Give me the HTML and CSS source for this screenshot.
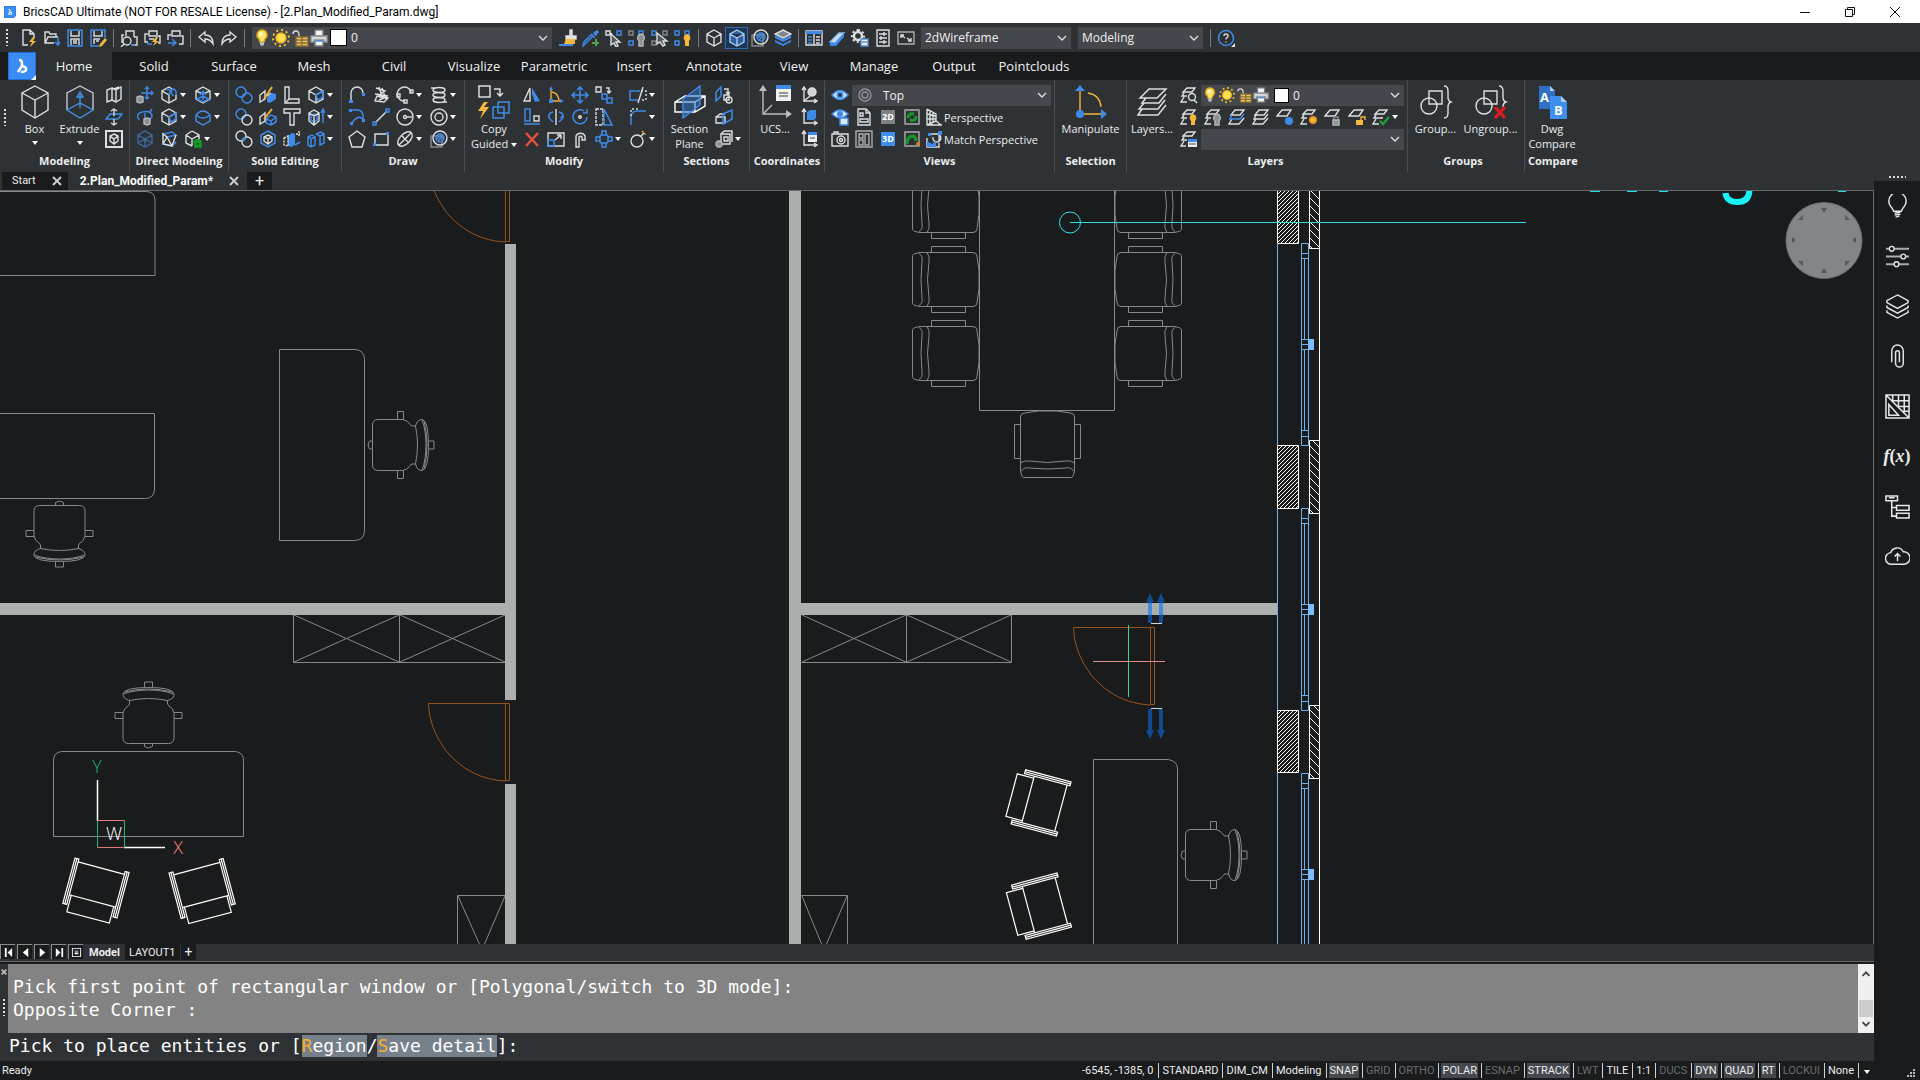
FILE: index.html
```html
<!DOCTYPE html>
<html lang="en">
<head>
  <meta charset="UTF-8">
  <meta name="viewport" content="width=device-width, initial-scale=1.0">
  <title>BricsCAD Ultimate</title>
  <link rel="stylesheet" href="styles.css">
</head>
<body>
  <!-- icon sprite -->
  <svg class="sprite" aria-hidden="true">
    <symbol id="i-new" viewBox="0 0 18 18"><path d="M8 16H3V1h7l4 4v4M10 1v4h4"/><path class="fy" d="M13 8l-4 5h3l-2 5 6-6h-3l2-4z"/></symbol>
    <symbol id="i-open" viewBox="0 0 18 18"><path d="M11 14H2V3h4l1 2h6v3M2 14l3-6h10"/><path class="b2" d="M15 8v8M12 13l3 3 2-3"/></symbol>
    <symbol id="i-save" viewBox="0 0 18 18"><path class="b2" d="M2 1h14v16H2z"/><path d="M5 2v5h8V2M5 16v-6h8v6M7 12h4M7 14h4"/></symbol>
    <symbol id="i-saveas" viewBox="0 0 18 18"><path class="b2" d="M10 17H2V1h14v8"/><path d="M5 2v5h8V2M5 15v-5h6M7 12h3"/><path class="fy" d="M16 9l2 2-5 6-3 1 1-3z"/></symbol>
    <symbol id="i-preview" viewBox="0 0 18 18"><path d="M6 7V2h8v6M4 6H2v8M14 8h3v8h-5"/><circle cx="7" cy="12" r="4"/><path d="M4 15l-3 3"/><path class="b2" d="M11 16h4"/></symbol>
    <symbol id="i-printflash" viewBox="0 0 18 18"><path d="M6 7V2h8v5zM5 5H2v8h3M15 7h2v7h-2M6 10h5"/><path class="fy" d="M13 8l-4 5h3l-2 4 6-5h-3l2-4z"/><path class="b2" d="M4 15h5"/></symbol>
    <symbol id="i-export" viewBox="0 0 18 18"><path d="M6 7V2h8v5zM5 6H2v5M15 7h2v8h-4"/><path class="b2" d="M2 14h7M6 10l4 4-4 3"/></symbol>
    <symbol id="i-undo" viewBox="0 0 18 18"><path d="M8 3L2 8l6 5v-3q5 0 8 5 0-9-8-9z"/></symbol>
    <symbol id="i-redo" viewBox="0 0 18 18"><path d="M10 3l6 5-6 5v-3q-5 0-8 5 0-9 8-9z"/></symbol>
    <symbol id="i-bulb" viewBox="0 0 18 18"><path fill="#ffe36a" stroke="#d9a520" d="M9 1a5 5 0 0 0-3 9l1 3h4l1-3a5 5 0 0 0-3-9z"/><path fill="#b9bcc0" stroke="none" d="M7 13h4v3l-2 1-2-1z"/><circle fill="#fff9c8" stroke="none" cx="8" cy="5" r="2"/></symbol>
    <symbol id="i-sun" viewBox="0 0 18 18"><circle cx="9" cy="9" r="5" fill="#ffe14d" stroke="#e8a92b"/><path stroke="#f2c230" stroke-width="2" stroke-dasharray="2 3" d="M9 1a8 8 0 1 1 0 16a8 8 0 1 1 0-16z"/></symbol>
    <symbol id="i-lock" viewBox="0 0 18 18"><path stroke="#d9dbdd" d="M2 5q0-3 3-3t3 4v3"/><path fill="#e8c878" stroke="#8a6d2b" d="M5 8h12v9H5z"/><path stroke="#8a6d2b" d="M5 11h12M5 14h12M11 8v9"/></symbol>
    <symbol id="i-printer" viewBox="0 0 18 18"><path fill="#f4f5f6" stroke="#777" d="M5 1h8v6H5zM5 11h8v6H5z"/><path fill="#d5d8db" stroke="#8f9296" d="M1 7h16v6h-3v-2H4v2H1z"/><path class="b2" d="M6 12h6"/></symbol>
    <symbol id="i-brush" viewBox="0 0 18 18"><path fill="#e6e7e8" d="M11 1h2v6h-2zM7 7h10v3H7z"/><path class="fy" d="M7 10h9v5H5z"/><path class="fb" d="M0 15h14v2H0z"/></symbol>
    <symbol id="i-dropper" viewBox="0 0 18 18"><path class="b2" d="M9 5l4 4M11 7L3 15l-2 2 1-4 7-7"/><path class="fb" d="M12 3l3-2 2 2-3 4-3-2z"/><path stroke="#4ea64c" stroke-width="2" d="M14 10v7M10 14h7"/></symbol>
    <symbol id="i-selcur" viewBox="0 0 18 18"><path d="M1 2h4v4H1z"/><path class="b2" d="M12 2h4v4h-4z"/><path d="M5 4l2 1"/><path fill="#55585c" d="M6 5v11l3-2 2 4 2-1-2-4h4z"/></symbol>
    <symbol id="i-selcur2" viewBox="0 0 18 18"><path class="b2" d="M1 2h4v4H1z"/><path d="M12 2h4v4h-4zM1 12h4v4H1z" stroke="#85888c"/><path fill="#55585c" d="M6 4v11l3-2 3 4 2-1-2-4h4z"/></symbol>
    <symbol id="i-isoff" viewBox="0 0 18 18"><path stroke="#85888c" d="M1 2h4v4H1z"/><path class="b2" d="M11 2h4v4h-4zM1 12h4v4H1z"/><path class="fg" d="M13 5a4 4 0 0 0-2 7v5h4v-5a4 4 0 0 0-2-7z"/></symbol>
    <symbol id="i-ison" viewBox="0 0 18 18"><path class="b2" d="M1 2h4v4H1zM11 2h4v4h-4zM1 12h4v4H1z"/><path class="fy" d="M13 5a4 4 0 0 0-2 7v5h4v-5a4 4 0 0 0-2-7z"/></symbol>
    <symbol id="i-cube" viewBox="0 0 18 18"><path d="M9 1l7 4v8l-7 4-7-4V5zM2 5l7 4 7-4M9 9v8"/></symbol>
    <symbol id="i-cubefull" viewBox="0 0 18 18"><path fill="#2c5f9e" stroke="#a9c9ef" d="M9 1l7 4v8l-7 4-7-4V5zM2 5l7 4 7-4M9 9v8"/></symbol>
    <symbol id="i-shade" viewBox="0 0 18 18"><path stroke="#85888c" d="M1 6h11v11H1z"/><circle cx="10" cy="8" r="7"/><circle cx="10" cy="8" r="4" class="b2"/><path class="b" d="M7 9l4-4M8 11l5-5"/></symbol>
    <symbol id="i-layercube" viewBox="0 0 18 18"><path fill="#7f858c" d="M9 1l8 4-8 4-8-4z"/><path class="fb" d="M1 6l8 4 8-4v3l-8 4-8-4zM1 11l8 4 8-4v2l-8 4-8-4z"/></symbol>
    <symbol id="i-table" viewBox="0 0 18 18"><path d="M1 2h16v14H1z"/><path class="fb" d="M1 2h16v3H1z"/><path class="b2" d="M3 8h4M3 11h4M3 14h4"/><path d="M9 5v11M11 8h4M11 11h4M11 14h4"/></symbol>
    <symbol id="i-eraser" viewBox="0 0 18 18"><path fill="#cfe0f5" stroke="#8fb7e8" d="M2 13l9-9h5l-9 10z"/><path class="fb" d="M7 14l9-10v4l-8 9H2v-4z"/></symbol>
    <symbol id="i-gear" viewBox="0 0 18 18"><circle cx="7" cy="7" r="4" stroke-width="2.4"/><path stroke-width="2" stroke-dasharray="2 2.4" d="M7 1a6 6 0 1 1 0 12a6 6 0 1 1 0-12z"/><path fill="#eceef0" stroke="#5a8fd0" d="M10 10h7v7h-7zM11 13h5"/></symbol>
    <symbol id="i-options" viewBox="0 0 18 18"><path d="M3 1h12v16H3zM5 5h8M5 9h8M5 13h8M10 3v4M7 7v4M10 11v4"/></symbol>
    <symbol id="i-full" viewBox="0 0 18 18"><path stroke="#a9acb0" d="M1 3h16v12H1z"/><path d="M4 6l4 3M4 9V6h3M14 12l-4-3M14 9v3h-3"/></symbol>
    <symbol id="i-help" viewBox="0 0 18 18"><circle cx="9" cy="9" r="7.5" class="b2"/><path d="M7 7q0-2 2-2t2 2q0 1-2 2.500v1M9 12.500v1"/><path fill="#ddd" stroke="none" d="M18 14v4h-4z"/></symbol>
    <symbol id="i-chev" viewBox="0 0 18 18"><path d="M5 7l4 4 4-4"/></symbol>
    <symbol id="i-arrow" viewBox="0 0 6 4"><path fill="#fff" stroke="none" d="M0 0h6L3 4z"/></symbol>

    <symbol id="i-box" viewBox="0 0 32 34"><path d="M16 1l13 7v17l-13 8-13-8V8zM3 8l13 7 13-7M16 15v18"/></symbol>
    <symbol id="i-extrude" viewBox="0 0 32 34"><path d="M3 25V8l13-7 13 7v17" stroke="#c4c7ca"/><path class="b" d="M3 25l13-7 13 7-13 8zM16 23V9M13 12l3-5 3 5z"/></symbol>
    <symbol id="i-poly" viewBox="0 0 18 18"><path d="M2 4l5-2v12l-5 2zM7 2l4 2v12l-4-2M11 4l5-3v12l-5 3M9 3l5-2"/></symbol>
    <symbol id="i-pushpull" viewBox="0 0 18 18"><path class="b2" d="M1 11l4-5h12l-4 5z"/><path d="M9 8V1M6 3l3-2 3 2M9 11v6M6 15l3 2 3-2"/></symbol>
    <symbol id="i-boxed" viewBox="0 0 18 18"><path stroke-width="2" d="M1 1h16v16H1z"/><path d="M9 4l4 2v5l-4 3-4-3V6zM5 6l4 3 4-3M9 9v5"/></symbol>
    <symbol id="i-dmove" viewBox="0 0 18 18"><path class="b2" d="M11 1v12M5 7h12M9 3l2-2 2 2M9 11l2 2 2-2M15 5l2 2-2 2"/><path class="fg" d="M1 11l3-1 3 1v5l-3 1-3-1z"/></symbol>
    <symbol id="i-drot" viewBox="0 0 18 18"><path class="b2" d="M3 12Q-1 6 6 4q8-2 10 3 0 4-4 4M14 4l2-3M9 5v5"/><path class="fg" d="M8 11l3-1 3 1v5l-3 1-3-1z"/></symbol>
    <symbol id="i-cubeb" viewBox="0 0 18 18"><path class="b" opacity=".6" d="M9 1l7 4v8l-7 4-7-4V5zM2 5l7 4 7-4M9 9v8M2 13l7-4 7 4"/></symbol>
    <symbol id="i-fillet" viewBox="0 0 18 18"><path d="M16 9v4l-7 4-7-4V5l7-4 3 2M2 5l7 4v8"/><path class="b2" d="M9 9q1-5 5-6 3 2 2 6M6 3q5 0 7 7"/></symbol>
    <symbol id="i-cubeface" viewBox="0 0 18 18"><path d="M9 1l7 4v8l-7 4-7-4V5zM2 5l7 4 7-4M9 9v8"/><path class="b2" d="M9 9l7-4v6l-5 3z"/></symbol>
    <symbol id="i-cubeup" viewBox="0 0 18 18"><path d="M9 1l7 4v8l-7 4-7-4V5zM2 5l7 3 7-3"/><path class="b2" d="M9 14V6M6 9l3-4 3 4M3 13l6-3 6 3-6 3z"/></symbol>
    <symbol id="i-loop" viewBox="0 0 18 18"><path class="b" d="M2 7q7-8 14 0v6l-7 4-7-4z"/><path d="M2 7q7 6 14 0" class="b2"/></symbol>
    <symbol id="i-twist" viewBox="0 0 18 18"><path class="b2" d="M3 4l9-2 4 3-9 2zM3 14l9 2 4-4"/><path d="M3 4l4 3 5 9-9-2zM16 5l-4 11M7 7L3 14"/></symbol>
    <symbol id="i-cubegreen" viewBox="0 0 18 18"><path d="M8 1l7 4v6M8 16l-6-3V5l6-4M2 5l6 4 7-4M8 9v7"/><path fill="#149a28" stroke="#149a28" d="M10 11q4-3 7 0v6h-6z"/><path stroke="#0b5615" d="M12 14h3"/></symbol>
    <symbol id="i-union" viewBox="0 0 18 18"><circle class="b2" cx="6" cy="6" r="5"/><circle class="b2" cx="12" cy="12" r="5"/></symbol>
    <symbol id="i-subtract" viewBox="0 0 18 18"><circle class="b2" cx="6" cy="6" r="5"/><circle cx="12" cy="12" r="5"/></symbol>
    <symbol id="i-intersect" viewBox="0 0 18 18"><circle cx="6" cy="6" r="5"/><circle cx="12" cy="12" r="5"/><path class="fb" d="M7 11q0-4 4-4 0 4-4 4z"/></symbol>
    <symbol id="i-slice" viewBox="0 0 18 18"><path class="fb" d="M8 11l5-4 4 1v5l-6 4-3-1z"/><path d="M1 16V9l5-4v8zM8 10l4-3"/><path class="y" stroke-width="2" d="M13 1L5 13"/></symbol>
    <symbol id="i-slice2" viewBox="0 0 18 18"><path class="b2" d="M7 11l5-4 5 2v5l-5 3-5-2zM7 11l5 2 5-4M12 13v4"/><path d="M1 16V9l5-4v8z"/><path class="y" stroke-width="2" d="M13 1L5 11"/></symbol>
    <symbol id="i-lshape" viewBox="0 0 18 18"><path d="M2 1h4v12h10v4H2z"/><path d="M6 13l-4 4"/></symbol>
    <symbol id="i-tshape" viewBox="0 0 18 18"><path d="M1 1h16v4h-6v12H7V5H1z"/></symbol>
    <symbol id="i-shell" viewBox="0 0 18 18"><path class="b2" d="M9 1l7 4v8l-7 4-7-4V5z"/><path d="M9 5l4 2v4l-4 3-4-3V7zM5 7l4 2 4-2M9 9v5"/></symbol>
    <symbol id="i-blocks" viewBox="0 0 18 18"><path class="fb" d="M5 6l4-3 3 1v11l-4 2-3-1z"/><path stroke-dasharray="2 1" d="M1 8l4-2v10l-4-1zM16 1v5M13 4h4"/><path class="b2" d="M12 15l5-3"/></symbol>
    <symbol id="i-blocks2" viewBox="0 0 18 18"><path class="b2" d="M1 7l4-2 3 2v8l-4 2-3-2zM1 7l3 2 4-2M4 9v8M9 4l5-2 3 2v9l-4 2V6M9 4l4 2 4-2"/></symbol>
    <symbol id="i-taper" viewBox="0 0 18 18"><path class="b2" d="M16 15V3M14 5l2-4 2 4M4 8l3-2 3 2v4l-3 2-3-2z"/><path d="M2 5l5-3 5 3v8l-5 4-5-4zM2 5l5 3 5-3M7 8v9"/></symbol>

    <symbol id="i-arcpt" viewBox="0 0 18 18"><path d="M3 14V7a6 6 0 0 1 12 0"/><path class="fb" d="M1 14h4v3H1zM14 7h3v3h-3z"/></symbol>
    <symbol id="i-arc2" viewBox="0 0 18 18"><path class="b2" d="M3 2h7q6 1 5 9-5-5-11 4"/><path class="fb" d="M1 1h3v3H1zM14 11h3v3h-3zM2 14h3v3H2z"/></symbol>
    <symbol id="i-pent" viewBox="0 0 18 18"><path d="M9 1l8 6-3 10H4L1 7z"/></symbol>
    <symbol id="i-scribble" viewBox="0 0 18 18"><path d="M4 2l9 3-6 4 9 3-4 4-9-1 2-5 7 2-5 2M7 1l4 12M3 8l13 2M10 2l4 11"/></symbol>
    <symbol id="i-line" viewBox="0 0 18 18"><path d="M3 15L15 3"/><path class="b2" d="M1 14h3v3H1zM14 1h3v3h-3z"/></symbol>
    <symbol id="i-rect" viewBox="0 0 18 18"><path d="M3 4h13v11H3z"/><path class="fb" d="M14 2h3v3h-3zM1 13h3v3H1z"/></symbol>
    <symbol id="i-arc" viewBox="0 0 18 18"><path d="M9 15A7 7 0 1 1 15 6"/><path d="M1 8h3v3H1zM8 14h3v3H8zM14 4h3v3h-3z"/></symbol>
    <symbol id="i-circle" viewBox="0 0 18 18"><circle cx="9" cy="9" r="8"/><circle cx="9" cy="9" r="1.500"/><path d="M10 9h6"/></symbol>
    <symbol id="i-ellipse" viewBox="0 0 18 18"><ellipse cx="9" cy="9" rx="9" ry="5" transform="rotate(-45 9 9)"/><path d="M3 15L15 3M6 6l6 6"/></symbol>
    <symbol id="i-helix" viewBox="0 0 18 18"><ellipse cx="9" cy="4" rx="6" ry="2.500"/><ellipse cx="9" cy="9" rx="6" ry="2.500"/><ellipse cx="9" cy="14" rx="6" ry="2.500"/><path d="M1 2h4M13 16h4"/></symbol>
    <symbol id="i-donut" viewBox="0 0 18 18"><circle cx="9" cy="9" r="8"/><circle cx="9" cy="9" r="4"/></symbol>

    <symbol id="i-copyg" viewBox="0 0 34 34"><path stroke-width="1.500" d="M2 1h11v11H2zM17 4h6v6M20 8l3 3 3-3"/><path class="b2" d="M21 17h11v11H21zM16 22h11v11H16z"/><path class="fy" d="M7 17L1 26h5l-3 8 9-12H7l4-5z"/></symbol>
    <symbol id="i-mirror" viewBox="0 0 18 18"><path d="M1 15L7 2v13z"/><path class="fb" d="M9 2l8 13-5 1-3-8z"/></symbol>
    <symbol id="i-align" viewBox="0 0 18 18"><path class="b2" d="M2 1h5v12H2zM1 16h16"/><path d="M11 8h5v5h-5z"/></symbol>
    <symbol id="i-del" viewBox="0 0 18 18"><path stroke="#e5533d" stroke-width="2.400" d="M3 3l12 13M15 3L3 16"/></symbol>
    <symbol id="i-manip" viewBox="0 0 18 18"><path class="y" d="M4 15V4M4 15h9M5 6q6 1 7 8"/><path class="fb" d="M2 4l2-4 2 4zM13 13l4 2-4 2zM2 13h4v4H2z"/></symbol>
    <symbol id="i-flip" viewBox="0 0 18 18"><path d="M9 1v16"/><path class="b2" d="M6 4Q1 5 2 10l4 4M12 4q5 1 4 6l-4 4M16 8l-3 2"/></symbol>
    <symbol id="i-scale" viewBox="0 0 18 18"><path d="M1 3h16v13H1zM8 10l6-5M10 5h4v4"/><path class="b2" d="M1 10h6v6H1z"/></symbol>
    <symbol id="i-move" viewBox="0 0 18 18"><path class="b2" d="M9 1v16M1 9h16M6 4l3-3 3 3M6 14l3 3 3-3M4 6L1 9l3 3M14 6l3 3-3 3"/></symbol>
    <symbol id="i-rotate" viewBox="0 0 18 18"><path class="b2" d="M13 3a7 7 0 1 0 3 6M12 5l4 0 0-4"/><circle cx="9" cy="9" r="1.300"/></symbol>
    <symbol id="i-offset" viewBox="0 0 18 18"><path d="M5 17V6a5 5 0 0 1 9 0v4h-3V7a2 2 0 0 0-3 0v10z"/></symbol>
    <symbol id="i-copy" viewBox="0 0 18 18"><path d="M1 1h5v5H1zM11 2h3v5M12 5l2 2 2-2"/><path class="b2" d="M7 8h5v5H7zM12 12h5v5h-5z"/></symbol>
    <symbol id="i-stretch" viewBox="0 0 18 18"><path d="M1 1h7v16H1z" stroke-dasharray="3 1"/><path class="b2" d="M9 1l8 16H9z"/></symbol>
    <symbol id="i-explode" viewBox="0 0 18 18"><circle class="b2" cx="9" cy="9" r="5"/><path class="b2" fill="#2e3235" d="M7 1h4v4H7zM7 13h4v4H7zM1 7h4v4H1zM13 7h4v4h-4z"/></symbol>
    <symbol id="i-trim" viewBox="0 0 18 18"><path d="M14 1L9 17"/><path class="b2" d="M11 5H1v9h8"/><path d="M12 5h5v9h-5" stroke-dasharray="2 2"/></symbol>
    <symbol id="i-corner" viewBox="0 0 18 18"><path class="b2" d="M2 17V9q0-6 7-6h8"/><path stroke-dasharray="2 2" d="M2 8V1h8"/></symbol>
    <symbol id="i-bomb" viewBox="0 0 18 18"><circle cx="8" cy="11" r="6"/><path d="M12 6l3-3"/><path class="y" stroke-dasharray="2 1" d="M13 1l4 4"/></symbol>

    <symbol id="i-section" viewBox="0 0 34 34"><path stroke="#fff" d="M2 17l10-6h20v10l-10 6H2zM2 17h20v10M22 17l10-6"/><path fill="#2d78cf" fill-opacity=".5" stroke="#3f8ae8" d="M10 14l17-13v19L10 33z"/></symbol>
    <symbol id="i-sec1" viewBox="0 0 18 18"><path class="b2" d="M1 6l5-5v9l-5 5z"/><path d="M9 3h4v5M11 6l2 2 2-2M9 9h5v5H9z"/><circle cx="14" cy="14" r="3"/></symbol>
    <symbol id="i-sec2" viewBox="0 0 18 18"><path d="M1 9l4-3h5M1 9v6h9V9z"/><path class="b2" d="M8 6l9-4v9l-9 5z"/></symbol>
    <symbol id="i-sec3" viewBox="0 0 18 18"><path d="M6 4h9v10H6zM9 1h8v11M6 4l3-3"/><path d="M9 7h4v4H9z"/><circle class="fg" cx="4" cy="14" r="3"/></symbol>
    <symbol id="i-ucs" viewBox="0 0 34 34"><path stroke="#b9bcc0" d="M5 4v25h24M6 28l8-8"/><path fill="#b9bcc0" stroke="none" d="M1 6l4-6 4 6zM28 25l6 4-6 4z"/><path fill="#eef0f2" stroke="none" d="M18 1h15v15H18z"/><path class="fb" d="M18 0h15v4H18z"/><path stroke="#777" d="M21 8h9M21 11h9"/></symbol>
    <symbol id="i-ucs1" viewBox="0 0 18 18"><path d="M4 16V2M2 4l2-3 2 3M4 15h12M14 13l3 2-3 2M4 15l6-5"/><circle fill="#cfd2d5" cx="12" cy="6" r="4"/></symbol>
    <symbol id="i-ucs2" viewBox="0 0 18 18"><path d="M4 16V2M2 4l2-3 2 3M4 15h12M14 13l3 2-3 2"/><path class="fb" d="M7 4l3-2h6v8l-2 2H7z"/></symbol>
    <symbol id="i-ucs3" viewBox="0 0 18 18"><path d="M4 16V2M2 4l2-3 2 3M4 15h12M14 13l3 2-3 2"/><path fill="#eceef0" stroke="none" d="M8 3h9v9H8z"/><path class="fb" d="M8 2h9v3H8z"/><path stroke="#777" d="M10 8h5"/></symbol>

    <symbol id="i-eye" viewBox="0 0 18 18"><path fill="#dfe7f2" stroke="#3f8ae8" stroke-width="1.600" d="M1 9q8-9 16 0-8 9-16 0z"/><circle class="fb" cx="9" cy="9" r="3.500"/><circle fill="#15202e" stroke="none" cx="9" cy="9" r="1.500"/></symbol>
    <symbol id="i-eyesave" viewBox="0 0 18 18"><path fill="#dfe7f2" stroke="#3f8ae8" stroke-width="1.600" d="M1 6q8-8 16 0-8 8-16 0z"/><circle class="fb" cx="9" cy="6" r="3"/><path fill="#dce9fa" stroke="#3f8ae8" d="M9 10h8v7H9z"/></symbol>
    <symbol id="i-camera" viewBox="0 0 18 18"><path d="M1 4h16v12H1zM3 4V2h4v2"/><circle cx="10" cy="10" r="4"/><circle cx="10" cy="10" r="1.500"/></symbol>
    <symbol id="i-page" viewBox="0 0 18 18"><path d="M3 1h8l4 4v12H3zM11 1v4h4M5 5h3v3H5zM5 11h8v3H5z"/></symbol>
    <symbol id="i-vports" viewBox="0 0 18 18"><path stroke="#a9acb0" d="M1 1h16v16H1zM4 4h4v4H4zM4 10h4v5H4zM10 4h4v11h-4z"/></symbol>
    <symbol id="i-regen" viewBox="0 0 18 18"><path stroke="#a9acb0" d="M2 2h14v14H2z"/><path stroke="#159a28" stroke-width="3" d="M5 10q0-5 6-4M13 8q0 6-6 4"/></symbol>
    <symbol id="i-regen2" viewBox="0 0 18 18"><path stroke="#a9acb0" d="M2 2h14v14H2z"/><path stroke="#159a28" stroke-width="3" d="M4 14q0-8 6-8 3 1 3 5"/><circle cx="15" cy="14" r="2" fill="#e07a2c" stroke="none"/></symbol>
    <symbol id="i-persp" viewBox="0 0 18 18"><path d="M2 1v16h15M2 1l9 5v7l-9 4M2 6l9 2M2 11h9M5 3v12M8 5v9M11 13l5 4M5 14l3 3"/></symbol>
    <symbol id="i-match" viewBox="0 0 18 18"><path d="M6 4h8v8M8 7a4 4 0 1 0 4-3M2 8v9h12v-4"/><path class="fb" d="M2 11l5 3 4-3v6H2zM13 1h4v4h-4zM3 3h3v3H3z"/></symbol>
    <symbol id="i-target" viewBox="0 0 18 18"><circle cx="9" cy="9" r="6" stroke="#8d9094"/><circle cx="9" cy="9" r="3" stroke="#8d9094"/></symbol>
    <symbol id="i-manipbig" viewBox="0 0 34 34"><path class="y" d="M6 28V6M6 29h24M14 8q12 2 13 14"/><path class="fb" d="M1 6l5-6 5 6zM27 24l6 5-6 5z"/><circle class="fb" cx="6" cy="29" r="4"/></symbol>
    <symbol id="i-layersbig" viewBox="0 0 34 34"><path stroke-width="1.500" d="M14 4h17l-9 9H5zM11 13l-4 5h17l7-9M9 18l-5 6h19l7-9M7 24l-4 6h20l8-10"/></symbol>
    <symbol id="i-lay" viewBox="0 0 18 18"><path d="M7 2h9l-4 5H3zM4 7l-2 4h10l4-5M4 11l-3 5h10l5-6"/></symbol>
    <symbol id="i-layb" viewBox="0 0 18 18"><path d="M7 2h9l-4 5H3zM4 11l-3 5h10l5-6"/><path class="b2" d="M4 7l-2 4h10l4-5"/></symbol>
    <symbol id="i-layfind" viewBox="0 0 18 18"><path d="M7 2h8l-3 4H3zM4 7l-2 3h5M4 11l-3 5h6"/><circle cx="12" cy="11" r="3.500"/><path d="M14 14l3 3"/></symbol>
    <symbol id="i-layon" viewBox="0 0 18 18"><path d="M7 2h8l-3 4H3zM4 7l-2 3h5M4 11l-3 5h6"/><path class="fy" d="M13 6a4 4 0 0 0-2 7v4h4v-4a4 4 0 0 0-2-7z"/></symbol>
    <symbol id="i-layoff" viewBox="0 0 18 18"><path d="M7 2h8l-3 4H3zM4 7l-2 3h5M4 11l-3 5h6"/><path class="fg" d="M13 6a4 4 0 0 0-2 7v4h4v-4a4 4 0 0 0-2-7z"/></symbol>
    <symbol id="i-layfrz" viewBox="0 0 18 18"><path d="M6 2h9l-4 6H1z"/><circle class="fb" cx="13" cy="13" r="4"/></symbol>
    <symbol id="i-laythaw" viewBox="0 0 18 18"><path d="M7 2h8l-3 4H3zM4 7l-2 3h5M4 11l-3 5h6"/><circle fill="#f5b32f" stroke="#d9822b" cx="13" cy="12" r="3.500"/></symbol>
    <symbol id="i-laylock" viewBox="0 0 18 18"><path d="M6 2h9l-4 6H1z"/><path d="M10 12V9h4v3" stroke="#85888c"/><path class="fg" d="M9 12h6v5H9z"/></symbol>
    <symbol id="i-layunl" viewBox="0 0 18 18"><path d="M6 2h9l-4 6H1z"/><path class="y" d="M13 12V9h4v3"/><path class="fy" d="M8 12h7v5H8z"/></symbol>
    <symbol id="i-layok" viewBox="0 0 18 18"><path d="M7 2h8l-3 4H3zM4 7l-2 3h9M4 11l-3 5h6"/><path stroke="#1fa035" stroke-width="2.400" d="M8 13l3 3 6-7"/></symbol>
    <symbol id="i-laytab" viewBox="0 0 18 18"><path d="M7 2h8l-3 4H3zM4 7l-2 3h5M4 11l-3 5h5"/><path fill="#eceef0" stroke="none" d="M8 9h9v8H8z"/><path class="fb" d="M8 9h9v3H8z"/><path stroke="#777" d="M9 14h7"/></symbol>
    <symbol id="i-group" viewBox="0 0 34 34"><circle cx="10" cy="21" r="8"/><path d="M10 6h13v13H10zM25 1q4 0 4 5v6q0 4 3 5-3 1-3 5v6q0 5-4 5"/></symbol>
    <symbol id="i-ungroup" viewBox="0 0 34 34"><circle cx="10" cy="21" r="8"/><path d="M10 6h13v13H10zM25 1q4 0 4 5v6q0 4 3 5-3 1-3 5"/><path stroke="#e01b1b" stroke-width="3" d="M21 22l10 11M31 22L21 33"/></symbol>
    <symbol id="i-logo" viewBox="0 0 28 28"><path fill="#3b8cf5" stroke="#1d63c4" d="M0 0h28v28H0z"/><path stroke="#fff" stroke-width="2.500" d="M11 8q3 0 3 3v3l-4 6M14 14q5 1 4 4-1 2-5 2"/><path fill="#eee" stroke="none" d="M28 23v5h-5z"/></symbol>

    <symbol id="i-tip" viewBox="0 0 26 26"><path stroke-width="1.500" d="M9 18q-1-3-3-5a9 9 0 1 1 14 0q-2 2-3 5zM10 20l6-1M10 22l6-1M11 24l4-1"/></symbol>
    <symbol id="i-props" viewBox="0 0 26 26"><path stroke="#a9acb0" stroke-width="2" d="M1 5h24M1 13h24M1 21h24"/><g fill="#191b1d"><circle cx="7" cy="5" r="2.500"/><circle cx="19" cy="13" r="2.500"/><circle cx="12" cy="21" r="2.500"/></g></symbol>
    <symbol id="i-stack" viewBox="0 0 26 26"><path stroke-width="1.500" d="M13 1l11 6v2l-11 6L2 9V7zM2 12v2l11 6 11-6v-2M2 17v2l11 6 11-6v-2"/></symbol>
    <symbol id="i-clip" viewBox="0 0 26 26"><path stroke-width="1.500" d="M7 19V7a5 5 0 0 1 12 0v13a4 4 0 0 1-8 0V9a2 2 0 0 1 4 0v10"/></symbol>
    <symbol id="i-hatch" viewBox="0 0 26 26"><path stroke-width="1.600" d="M1 1h24v24H1zM1 1l24 24M4 11l10 11H4zM8 1v7M14 1v12M20 1v18M8 7h17M14 13h11M19 18h6"/></symbol>
    <symbol id="i-tree" viewBox="0 0 26 26"><path stroke-width="1.600" d="M1 2h12v5H1zM12 12h13v5H12zM12 20h13v5H12zM7 7v16h5M7 14h5M4 4h6"/></symbol>
    <symbol id="i-cloud" viewBox="0 0 26 26"><path stroke-width="1.500" d="M7 21a6 6 0 0 1-1-12 7 7 0 0 1 13-1 6.500 6.500 0 0 1 1 13zM13 18v-7M10 13l3-3 3 3"/></symbol>
  </svg>

  <header class="titlebar">
    <svg class="app-icon"><use href="#i-logo"/></svg>
    <span class="app-title">BricsCAD Ultimate (NOT FOR RESALE License) - [2.Plan_Modified_Param.dwg]</span>
    <button class="win-btn" aria-label="Minimize"><svg viewBox="0 0 12 12"><path d="M1 6.500h10"/></svg></button>
    <button class="win-btn" aria-label="Restore"><svg viewBox="0 0 12 12"><path d="M1.500 3.500h7v7h-7zM3.500 3V1.500h7v7H9"/></svg></button>
    <button class="win-btn" aria-label="Close"><svg viewBox="0 0 12 12"><path d="M1 1l10 10M11 1L1 11"/></svg></button>
  </header>

  <div class="quick-bar">
    <span class="grip"></span>
    <button class="qt" aria-label="New"><svg><use href="#i-new"/></svg></button>
    <button class="qt" aria-label="Open"><svg><use href="#i-open"/></svg></button>
    <button class="qt" aria-label="Save"><svg><use href="#i-save"/></svg></button>
    <button class="qt" aria-label="Save as"><svg><use href="#i-saveas"/></svg></button>
    <span class="sep"></span>
    <button class="qt" aria-label="Print preview"><svg><use href="#i-preview"/></svg></button>
    <button class="qt" aria-label="Print"><svg><use href="#i-printflash"/></svg></button>
    <button class="qt" aria-label="Export"><svg><use href="#i-export"/></svg></button>
    <span class="sep"></span>
    <button class="qt" aria-label="Undo"><svg><use href="#i-undo"/></svg></button>
    <button class="qt" aria-label="Redo"><svg><use href="#i-redo"/></svg></button>
    <span class="sep"></span>
    <div class="combo combo-layer">
      <svg><use href="#i-bulb"/></svg><svg><use href="#i-sun"/></svg><svg><use href="#i-lock"/></svg><svg><use href="#i-printer"/></svg>
      <span class="swatch"></span>
      <select aria-label="Current layer"><option>0</option></select>
      <svg class="chev"><use href="#i-chev"/></svg>
    </div>
    <button class="qt" aria-label="Match properties"><svg><use href="#i-brush"/></svg></button>
    <button class="qt" aria-label="Pick layer"><svg><use href="#i-dropper"/></svg></button>
    <button class="qt" aria-label="Select similar"><svg><use href="#i-selcur"/></svg></button>
    <button class="qt" aria-label="Hide objects"><svg><use href="#i-isoff"/></svg></button>
    <button class="qt" aria-label="Isolate objects"><svg><use href="#i-selcur2"/></svg></button>
    <button class="qt" aria-label="Show objects"><svg><use href="#i-ison"/></svg></button>
    <span class="sep"></span>
    <button class="qt" aria-label="Wireframe"><svg><use href="#i-cube"/></svg></button>
    <button class="qt active" aria-label="Shaded"><svg><use href="#i-cubefull"/></svg></button>
    <button class="qt" aria-label="Transparency"><svg><use href="#i-shade"/></svg></button>
    <button class="qt" aria-label="Render"><svg><use href="#i-layercube"/></svg></button>
    <span class="sep"></span>
    <button class="qt" aria-label="Explorer"><svg><use href="#i-table"/></svg></button>
    <button class="qt" aria-label="Purge"><svg><use href="#i-eraser"/></svg></button>
    <button class="qt" aria-label="Settings"><svg><use href="#i-gear"/></svg></button>
    <button class="qt" aria-label="Options"><svg><use href="#i-options"/></svg></button>
    <button class="qt" aria-label="Full screen"><svg><use href="#i-full"/></svg></button>
    <div class="combo combo-style">
      <select aria-label="Visual style"><option>2dWireframe</option></select>
      <svg class="chev"><use href="#i-chev"/></svg>
    </div>
    <div class="combo combo-space">
      <select aria-label="Workspace"><option>Modeling</option></select>
      <svg class="chev"><use href="#i-chev"/></svg>
    </div>
    <span class="sep"></span>
    <button class="qt" aria-label="Help"><svg><use href="#i-help"/></svg></button>
  </div>

  <nav class="ribbon-tabs">
    <button class="app-btn" aria-label="Application menu"><svg><use href="#i-logo"/></svg></button>
    <a href="#home" class="current">Home</a>
    <a href="#solid">Solid</a>
    <a href="#surface">Surface</a>
    <a href="#mesh">Mesh</a>
    <a href="#civil">Civil</a>
    <a href="#visualize">Visualize</a>
    <a href="#parametric">Parametric</a>
    <a href="#insert">Insert</a>
    <a href="#annotate">Annotate</a>
    <a href="#view">View</a>
    <a href="#manage">Manage</a>
    <a href="#output">Output</a>
    <a href="#pointclouds">Pointclouds</a>
  </nav>

  <div class="ribbon">
    <section class="panel p-modeling">
      <div class="panel-body">
        <span class="grip"></span>
        <button class="big"><svg><use href="#i-box"/></svg><span>Box</span><svg class="arrow"><use href="#i-arrow"/></svg></button>
        <button class="big"><svg><use href="#i-extrude"/></svg><span>Extrude</span><svg class="arrow"><use href="#i-arrow"/></svg></button>
        <div class="rows">
          <div class="row"><button class="tool" aria-label="Polysolid"><svg><use href="#i-poly"/></svg></button></div>
          <div class="row"><button class="tool" aria-label="Push pull"><svg><use href="#i-pushpull"/></svg></button></div>
          <div class="row"><button class="tool" aria-label="Solid block"><svg><use href="#i-boxed"/></svg></button></div>
        </div>
      </div>
      <h2>Modeling</h2>
    </section>

    <section class="panel p-direct">
      <div class="panel-body">
        <div class="rows">
          <div class="row">
            <button class="tool" aria-label="Move"><svg><use href="#i-dmove"/></svg></button>
            <button class="tool drop" aria-label="Fillet"><svg><use href="#i-fillet"/></svg><svg class="arrow"><use href="#i-arrow"/></svg></button>
            <button class="tool drop" aria-label="Push"><svg><use href="#i-cubeup"/></svg><svg class="arrow"><use href="#i-arrow"/></svg></button>
          </div>
          <div class="row">
            <button class="tool" aria-label="Rotate"><svg><use href="#i-drot"/></svg></button>
            <button class="tool drop" aria-label="Chamfer"><svg><use href="#i-cubeface"/></svg><svg class="arrow"><use href="#i-arrow"/></svg></button>
            <button class="tool drop" aria-label="Connect"><svg><use href="#i-loop"/></svg><svg class="arrow"><use href="#i-arrow"/></svg></button>
          </div>
          <div class="row">
            <button class="tool" aria-label="Ghost"><svg><use href="#i-cubeb"/></svg></button>
            <button class="tool" aria-label="Twist"><svg><use href="#i-twist"/></svg></button>
            <button class="tool drop" aria-label="Repair"><svg><use href="#i-cubegreen"/></svg><svg class="arrow"><use href="#i-arrow"/></svg></button>
          </div>
        </div>
      </div>
      <h2>Direct Modeling</h2>
    </section>

    <section class="panel p-solid">
      <div class="panel-body">
        <div class="rows">
          <div class="row">
            <button class="tool" aria-label="Union"><svg><use href="#i-union"/></svg></button>
            <button class="tool" aria-label="Slice"><svg><use href="#i-slice"/></svg></button>
            <button class="tool" aria-label="L connect"><svg><use href="#i-lshape"/></svg></button>
            <button class="tool drop" aria-label="Extrude face"><svg><use href="#i-cubeface"/></svg><svg class="arrow"><use href="#i-arrow"/></svg></button>
          </div>
          <div class="row">
            <button class="tool" aria-label="Subtract"><svg><use href="#i-subtract"/></svg></button>
            <button class="tool" aria-label="Slice surface"><svg><use href="#i-slice2"/></svg></button>
            <button class="tool" aria-label="T connect"><svg><use href="#i-tshape"/></svg></button>
            <button class="tool drop" aria-label="Taper"><svg><use href="#i-taper"/></svg><svg class="arrow"><use href="#i-arrow"/></svg></button>
          </div>
          <div class="row">
            <button class="tool" aria-label="Intersect"><svg><use href="#i-intersect"/></svg></button>
            <button class="tool" aria-label="Shell"><svg><use href="#i-shell"/></svg></button>
            <button class="tool" aria-label="Separate"><svg><use href="#i-blocks"/></svg></button>
            <button class="tool drop" aria-label="Blocks"><svg><use href="#i-blocks2"/></svg><svg class="arrow"><use href="#i-arrow"/></svg></button>
          </div>
        </div>
      </div>
      <h2>Solid Editing</h2>
    </section>

    <section class="panel p-draw">
      <div class="panel-body">
        <div class="rows">
          <div class="row">
            <button class="tool" aria-label="Polyline"><svg><use href="#i-arcpt"/></svg></button>
            <button class="tool" aria-label="Freehand"><svg><use href="#i-scribble"/></svg></button>
            <button class="tool drop" aria-label="Arc"><svg><use href="#i-arc"/></svg><svg class="arrow"><use href="#i-arrow"/></svg></button>
            <button class="tool drop" aria-label="Helix"><svg><use href="#i-helix"/></svg><svg class="arrow"><use href="#i-arrow"/></svg></button>
          </div>
          <div class="row">
            <button class="tool" aria-label="Spline"><svg><use href="#i-arc2"/></svg></button>
            <button class="tool" aria-label="Line"><svg><use href="#i-line"/></svg></button>
            <button class="tool drop" aria-label="Circle"><svg><use href="#i-circle"/></svg><svg class="arrow"><use href="#i-arrow"/></svg></button>
            <button class="tool drop" aria-label="Donut"><svg><use href="#i-donut"/></svg><svg class="arrow"><use href="#i-arrow"/></svg></button>
          </div>
          <div class="row">
            <button class="tool" aria-label="Polygon"><svg><use href="#i-pent"/></svg></button>
            <button class="tool" aria-label="Rectangle"><svg><use href="#i-rect"/></svg></button>
            <button class="tool drop" aria-label="Ellipse"><svg><use href="#i-ellipse"/></svg><svg class="arrow"><use href="#i-arrow"/></svg></button>
            <button class="tool drop" aria-label="Region"><svg><use href="#i-shade"/></svg><svg class="arrow"><use href="#i-arrow"/></svg></button>
          </div>
        </div>
      </div>
      <h2>Draw</h2>
    </section>

    <section class="panel p-modify">
      <div class="panel-body">
        <button class="big"><svg><use href="#i-copyg"/></svg><span>Copy</span><span>Guided <svg class="arrow"><use href="#i-arrow"/></svg></span></button>
        <div class="rows">
          <div class="row">
            <button class="tool" aria-label="Mirror"><svg><use href="#i-mirror"/></svg></button>
            <button class="tool" aria-label="Manipulator"><svg><use href="#i-manip"/></svg></button>
            <button class="tool" aria-label="Move"><svg><use href="#i-move"/></svg></button>
            <button class="tool spaced" aria-label="Copy"><svg><use href="#i-copy"/></svg></button>
            <button class="tool drop" aria-label="Trim"><svg><use href="#i-trim"/></svg><svg class="arrow"><use href="#i-arrow"/></svg></button>
          </div>
          <div class="row">
            <button class="tool" aria-label="Align"><svg><use href="#i-align"/></svg></button>
            <button class="tool" aria-label="Flip"><svg><use href="#i-flip"/></svg></button>
            <button class="tool" aria-label="Rotate"><svg><use href="#i-rotate"/></svg></button>
            <button class="tool spaced" aria-label="Stretch"><svg><use href="#i-stretch"/></svg></button>
            <button class="tool drop" aria-label="Corner fillet"><svg><use href="#i-corner"/></svg><svg class="arrow"><use href="#i-arrow"/></svg></button>
          </div>
          <div class="row">
            <button class="tool" aria-label="Erase"><svg><use href="#i-del"/></svg></button>
            <button class="tool" aria-label="Scale"><svg><use href="#i-scale"/></svg></button>
            <button class="tool" aria-label="Offset"><svg><use href="#i-offset"/></svg></button>
            <button class="tool drop" aria-label="Array"><svg><use href="#i-explode"/></svg><svg class="arrow"><use href="#i-arrow"/></svg></button>
            <button class="tool drop" aria-label="Explode"><svg><use href="#i-bomb"/></svg><svg class="arrow"><use href="#i-arrow"/></svg></button>
          </div>
        </div>
      </div>
      <h2>Modify</h2>
    </section>

    <section class="panel p-sections">
      <div class="panel-body">
        <button class="big"><svg><use href="#i-section"/></svg><span>Section</span><span>Plane</span></button>
        <div class="rows">
          <div class="row"><button class="tool" aria-label="Section block"><svg><use href="#i-sec1"/></svg></button></div>
          <div class="row"><button class="tool" aria-label="Live section"><svg><use href="#i-sec2"/></svg></button></div>
          <div class="row"><button class="tool drop" aria-label="Flatten"><svg><use href="#i-sec3"/></svg><svg class="arrow"><use href="#i-arrow"/></svg></button></div>
        </div>
      </div>
      <h2>Sections</h2>
    </section>

    <section class="panel p-coords">
      <div class="panel-body">
        <button class="big"><svg><use href="#i-ucs"/></svg><span>UCS...</span></button>
        <div class="rows">
          <div class="row"><button class="tool" aria-label="World UCS"><svg><use href="#i-ucs1"/></svg></button></div>
          <div class="row"><button class="tool" aria-label="Face UCS"><svg><use href="#i-ucs2"/></svg></button></div>
          <div class="row"><button class="tool" aria-label="Named UCS"><svg><use href="#i-ucs3"/></svg></button></div>
        </div>
      </div>
      <h2>Coordinates</h2>
    </section>

    <section class="panel p-views">
      <div class="panel-body">
        <div class="rows">
          <div class="row">
            <button class="tool" aria-label="Look from"><svg><use href="#i-eye"/></svg></button>
            <div class="combo combo-view">
              <svg><use href="#i-target"/></svg>
              <select aria-label="View"><option>Top</option></select>
              <svg class="chev"><use href="#i-chev"/></svg>
            </div>
          </div>
          <div class="row">
            <button class="tool" aria-label="Save view"><svg><use href="#i-eyesave"/></svg></button>
            <button class="tool" aria-label="Page"><svg><use href="#i-page"/></svg></button>
            <button class="tool"><span class="tag">2D</span></button>
            <button class="tool" aria-label="Regenerate"><svg><use href="#i-regen"/></svg></button>
            <button class="tool wide"><svg><use href="#i-persp"/></svg>Perspective</button>
          </div>
          <div class="row">
            <button class="tool" aria-label="Camera"><svg><use href="#i-camera"/></svg></button>
            <button class="tool" aria-label="Viewports"><svg><use href="#i-vports"/></svg></button>
            <button class="tool"><span class="tag on">3D</span></button>
            <button class="tool" aria-label="Regenerate all"><svg><use href="#i-regen2"/></svg></button>
            <button class="tool wide"><svg><use href="#i-match"/></svg>Match Perspective</button>
          </div>
        </div>
      </div>
      <h2>Views</h2>
    </section>

    <section class="panel p-selection">
      <div class="panel-body">
        <button class="big"><svg><use href="#i-manipbig"/></svg><span>Manipulate</span></button>
      </div>
      <h2>Selection</h2>
    </section>

    <section class="panel p-layers">
      <div class="panel-body">
        <button class="big"><svg><use href="#i-layersbig"/></svg><span>Layers...</span></button>
        <div class="rows">
          <div class="row">
            <button class="tool" aria-label="Find layer"><svg><use href="#i-layfind"/></svg></button>
            <div class="combo combo-layer">
              <svg><use href="#i-bulb"/></svg><svg><use href="#i-sun"/></svg><svg><use href="#i-lock"/></svg><svg><use href="#i-printer"/></svg>
              <span class="swatch"></span>
              <select aria-label="Layer"><option>0</option></select>
              <svg class="chev"><use href="#i-chev"/></svg>
            </div>
          </div>
          <div class="row">
            <button class="tool" aria-label="Layer on"><svg><use href="#i-layon"/></svg></button>
            <button class="tool" aria-label="Layer off"><svg><use href="#i-layoff"/></svg></button>
            <button class="tool" aria-label="Isolate layer"><svg><use href="#i-layb"/></svg></button>
            <button class="tool" aria-label="Unisolate layer"><svg><use href="#i-lay"/></svg></button>
            <button class="tool" aria-label="Freeze layer"><svg><use href="#i-layfrz"/></svg></button>
            <button class="tool" aria-label="Thaw layers"><svg><use href="#i-laythaw"/></svg></button>
            <button class="tool" aria-label="Lock layer"><svg><use href="#i-laylock"/></svg></button>
            <button class="tool" aria-label="Unlock layer"><svg><use href="#i-layunl"/></svg></button>
            <button class="tool drop" aria-label="Make current"><svg><use href="#i-layok"/></svg><svg class="arrow"><use href="#i-arrow"/></svg></button>
          </div>
          <div class="row">
            <button class="tool" aria-label="Layer states"><svg><use href="#i-laytab"/></svg></button>
            <div class="combo">
              <select aria-label="Layer state"><option></option></select>
              <svg class="chev"><use href="#i-chev"/></svg>
            </div>
          </div>
        </div>
      </div>
      <h2>Layers</h2>
    </section>

    <section class="panel p-groups">
      <div class="panel-body">
        <button class="big"><svg><use href="#i-group"/></svg><span>Group...</span></button>
        <button class="big"><svg><use href="#i-ungroup"/></svg><span>Ungroup...</span></button>
      </div>
      <h2>Groups</h2>
    </section>

    <section class="panel p-compare">
      <div class="panel-body">
        <button class="big">
          <svg class="ab" viewBox="0 0 34 34">
            <path fill="#2f6fc4" d="M4 1h11l5 5v18H4z"/>
            <path fill="#3f8ff0" d="M15 11h11l6 6v17H15z"/>
            <path fill="#a9cdf8" d="M26 11l6 6h-6zM15 1l5 5h-5z"/>
            <text x="5" y="17">A</text>
            <text x="19" y="30">B</text>
          </svg>
          <span>Dwg</span><span>Compare</span>
        </button>
      </div>
      <h2>Compare</h2>
    </section>
  </div>

  <div class="workspace">
    <main class="document">
      <div class="doc-tabs">
        <div class="doc-tab">Start<button aria-label="Close Start"><svg viewBox="0 0 10 10"><path d="M1 1l8 8M9 1L1 9"/></svg></button></div>
        <div class="doc-tab current">2.Plan_Modified_Param*<button aria-label="Close drawing"><svg viewBox="0 0 10 10"><path d="M1 1l8 8M9 1L1 9"/></svg></button></div>
        <button class="add-tab" aria-label="New drawing">+</button>
      </div>

      <div class="canvas">
        <svg class="plan" viewBox="0 191 1873 753" preserveAspectRatio="xMinYMin slice">
          <defs>
            <pattern id="hatch-a" width="4" height="4" patternUnits="userSpaceOnUse"><path d="M-1 1l2-2M0 4l4-4M3 5l2-2"/></pattern>
            <pattern id="hatch-b" width="8" height="8" patternUnits="userSpaceOnUse"><path d="M-1 -1l10 10M-1 7l2 2M7 -1l2 2"/></pattern>
            <g id="office-chair">
              <path d="M-27.500 -20q0-5 5-5.500H3q5 1 7 5l2 1.500h4M-27.500 -20v40q0 5 5 5.500H3q5-1 7-5l2-1.500h4"/>
              <path d="M15.500 -19q2-7 7-6.500 6 2 6 25.500t-6 25.500q-5 1-7-6.500 4-19 0-38zM22 -25q4 10 4 25t-4 25M24 -24q6 24 0 48"/>
              <path d="M-2.500 -25.500v-8h6v8M-2.500 25.500v8h6v-8M-27.500 -4h-3q-3 4 0 8h3M29 -4h5v8h-5"/>
            </g>
            <g id="meeting-chair">
              <path d="M-26 -27H27q4 0 4 4l2 14V9l-2 14q0 4-4 4h-53M-26 -27q-7 1-7.500 3v48q.500 2 7.500 3"/>
              <path d="M-27 -26q4 2 3 8-2 18 0 36 1 6-3 8M-19 -27q3 4 2 9-3 18 0 36 1 5-2 9"/>
              <path d="M-14.500 -27v-6h34v6M-14.500 27v6h34v-6"/>
            </g>
            <g id="armchair">
              <path d="M0 0h4v47H0zM2 0v47M52 0h4v47h-4zM54 0v47M4 3h48M6 37h44M6 37v17h44V37M4 37h3M49 37h3"/>
            </g>
            <g id="door"><path d="M77 77.500Q42 76 18 48 0 24 0 0h81v77h-4M77 0v77"/></g>
            <g id="window">
              <path d="M1301.500 243.500h7v202h-7zM1301.500 253.500h7M1301.500 258.500h7M1301.500 339.500h7M1301.500 344.500h7M1301.500 349.500h7M1301.500 430.500h7M1301.500 436.500h7M1304.500 258.500v81M1304.500 349.500v81"/>
              <path class="knob" d="M1308 339h6v11h-6z"/>
            </g>
          </defs>

          <!-- walls -->
          <path class="wall" d="M505 244h11v456h-11zM505 784h11v170h-11zM0 603h505v12H0zM789 180h12v774h-12zM801 603h476v12H801z"/>

          <!-- desks, cabinets, meeting table -->
          <g class="grey">
            <path d="M0 191.500h146q9 0 9 9v75H0M0 413.500h154.500V489q0 9-9 9.500H0"/>
            <path d="M279.500 349.500h76q9 1 9 10v171q0 9-9 10h-76z"/>
            <path d="M53.500 836.500v-76q0-8 8-9h174q8 1 8 9v76z"/>
            <path d="M1093.500 950v-190.500h75q9 2 9 9V950"/>
            <path d="M979.500 180v230.500h135V180"/>
            <path d="M293.500 615v47.500H505M399.500 615v47.500M294 615l105 47M294 662l105-47M400 615l105 47M400 662l105-47"/>
            <path d="M801.500 662.500h210V615M906.500 615v47.500M802 615l104 47M802 662l104-47M907 615l104 47M907 662l104-47"/>
            <path d="M457.500 950v-54.500h48M458 896l24 54 23-54M801.500 895.500h46V950M802 896l22 54 23-54"/>
            <use href="#office-chair" transform="translate(400 445)"/>
            <use href="#office-chair" transform="translate(1213 855)"/>
            <use href="#office-chair" transform="translate(59.500 533) rotate(90)"/>
            <use href="#office-chair" transform="translate(148.500 716) rotate(-90)"/>
            <use href="#meeting-chair" transform="translate(946 205.500)"/>
            <use href="#meeting-chair" transform="translate(946 279.500)"/>
            <use href="#meeting-chair" transform="translate(946 353.500)"/>
            <use href="#meeting-chair" transform="translate(1148 205.500) scale(-1 1)"/>
            <use href="#meeting-chair" transform="translate(1148 279.500) scale(-1 1)"/>
            <use href="#meeting-chair" transform="translate(1148 353.500) scale(-1 1)"/>
            <use href="#meeting-chair" transform="translate(1047.500 444) rotate(-90)"/>
          </g>

          <g class="white">
            <use href="#armchair" transform="translate(75 858) rotate(15)"/>
            <use href="#armchair" transform="translate(169 873) rotate(-15)"/>
            <use href="#armchair" transform="translate(1071 782) rotate(105)"/>
            <use href="#armchair" transform="translate(1057 873) rotate(75)"/>
          </g>

          <!-- doors -->
          <g class="door">
            <use href="#door" x="428.500" y="164.500"/>
            <use href="#door" x="428.500" y="703.500"/>
            <use href="#door" x="1073.500" y="627.500"/>
          </g>

          <!-- facade -->
          <g class="hatched">
            <path fill="url(#hatch-a)" d="M1277.500 180.500h21v63h-21zM1277.500 445.500h21v63h-21zM1277.500 710.500h21v62h-21z"/>
            <path fill="url(#hatch-b)" d="M1309.500 175.500h10v73h-10zM1309.500 440.500h10v73h-10zM1309.500 705.500h10v73h-10z"/>
            <path d="M1319.500 180v774"/>
          </g>
          <g class="glass">
            <path d="M1277.500 244v201M1277.500 509v201M1277.500 773v180"/>
            <use href="#window"/>
            <use href="#window" y="265"/>
            <use href="#window" y="530"/>
          </g>

          <!-- leader and clipped label -->
          <g class="cyan">
            <circle cx="1070" cy="222.500" r="10.500"/>
            <path d="M1070 222.500h456"/>
            <path class="thick" d="M1725.500 193q1 9 12 9 12 0 12-13"/>
            <path class="thin" d="M1590 191h10M1627 191h10M1659 191h9M1838 191h8"/>
          </g>

          <!-- dynamic dimension arrows -->
          <g class="nudge">
            <path d="M1148 623v-21h-2l4-9 4 9h-2v21zM1159 623v-21h-2l4-9 4 9h-2v21zM1148 709v21h-2l4 9 4-9h-2v-21zM1159 709v21h-2l4 9 4-9h-2v-21z"/>
            <path class="lite" d="M1148 603h4v12h-4zM1159 603h4v12h-4z"/>
            <path class="tick" d="M1151 623.500h11M1151 708.500h11"/>
          </g>
          <path class="cross-y" d="M1128.500 625v72"/>
          <path class="cross-x" d="M1093 661.500h72"/>

          <!-- UCS icon -->
          <g class="ucs">
            <path class="axis" d="M97.500 780v41M124 847.500h41"/>
            <path class="uy" d="M97.500 820.500v27M124.500 820.500v27"/>
            <path class="ux" d="M97.500 820.500h27M97.500 847.500h27"/>
            <text class="ty" x="97" y="773">Y</text>
            <text class="tx" x="178" y="854">X</text>
            <text class="tw" x="114" y="840">W</text>
          </g>

          <!-- look-from widget -->
          <g class="wheel">
            <circle cx="1824" cy="240.500" r="38"/>
            <path d="M1821 208h6l-3 5zM1821 273h6l-3-5zM1792 237v6l4-3zM1856 237v6l-4-3zM1798 220l5-5v5zM1850 220l-5-5v5zM1798 261l5 5v-5zM1850 261l-5 5v-5z"/>
          </g>
        </svg>
      </div>

      <div class="layout-tabs">
        <button class="nav-btn" aria-label="First"><svg viewBox="0 0 12 12"><path d="M2 1h2v10H2zM10 1v10L5 6z"/></svg></button>
        <button class="nav-btn" aria-label="Previous"><svg viewBox="0 0 12 12"><path d="M9 1v10L3 6z"/></svg></button>
        <button class="nav-btn" aria-label="Next"><svg viewBox="0 0 12 12"><path d="M3 1v10l6-5z"/></svg></button>
        <button class="nav-btn" aria-label="Last"><svg viewBox="0 0 12 12"><path d="M8 1h2v10H8zM2 1v10l5-5z"/></svg></button>
        <button class="nav-btn" aria-label="List"><svg viewBox="0 0 12 12"><path fill-rule="evenodd" d="M1 1h10v10H1zM2 2v8h8V2zM4 4h4v1H4zM4 6h4v2H4z"/></svg></button>
        <button class="layout current">Model</button>
        <button class="layout">LAYOUT1</button>
        <button class="layout add" aria-label="New layout">+</button>
      </div>

      <div class="command">
        <div class="history">
          <div class="history-side"><button aria-label="Close command line"><svg viewBox="0 0 10 10"><path d="M1 1l8 8M9 1L1 9"/></svg></button><span class="grip"></span></div>
          <div class="history-text">
            <p>Pick first point of rectangular window or [Polygonal/switch to 3D mode]:</p>
            <p>Opposite Corner :</p>
          </div>
          <div class="scroll"><svg viewBox="0 0 8 6"><path d="M1 5l3-3 3 3"/></svg><span class="thumb"></span><svg viewBox="0 0 8 6"><path d="M1 1l3 3 3-3"/></svg></div>
        </div>
        <div class="prompt">
          <label for="cmd">Pick to place entities or [<button><b>R</b>egion</button>/<button><b>S</b>ave detail</button>]:</label>
          <input id="cmd" type="text">
        </div>
      </div>
    </main>

    <aside class="side">
      <div class="side-grip"><span class="grip"></span></div>
      <div class="side-icons">
        <button aria-label="Tips"><svg><use href="#i-tip"/></svg></button>
        <button aria-label="Properties"><svg><use href="#i-props"/></svg></button>
        <button aria-label="Layers"><svg><use href="#i-stack"/></svg></button>
        <button aria-label="Attachments"><svg><use href="#i-clip"/></svg></button>
        <button aria-label="Drawing explorer"><svg><use href="#i-hatch"/></svg></button>
        <button class="fx"><i>f</i>(<i>x</i>)</button>
        <button aria-label="Structure"><svg><use href="#i-tree"/></svg></button>
        <button aria-label="Cloud"><svg><use href="#i-cloud"/></svg></button>
      </div>
    </aside>
  </div>

  <footer class="status">
    <span class="ready">Ready</span>
    <span class="coords">-6545, -1385, 0</span>
    <button><span>STANDARD</span></button>
    <button><span>DIM_CM</span></button>
    <button><span>Modeling</span></button>
    <button class="on"><span>SNAP</span></button>
    <button class="off"><span>GRID</span></button>
    <button class="off"><span>ORTHO</span></button>
    <button class="on"><span>POLAR</span></button>
    <button class="off"><span>ESNAP</span></button>
    <button class="on"><span>STRACK</span></button>
    <button class="off"><span>LWT</span></button>
    <button><span>TILE</span></button>
    <button><span>1:1</span></button>
    <button class="off"><span>DUCS</span></button>
    <button class="on"><span>DYN</span></button>
    <button class="on"><span>QUAD</span></button>
    <button class="on"><span>RT</span></button>
    <button class="off"><span>LOCKUI</span></button>
    <button><span>None</span></button>
    <button class="more" aria-label="Status options"><svg class="arrow"><use href="#i-arrow"/></svg></button>
    <svg class="resize" viewBox="0 0 9 9"><path d="M7 1h2M7 4h2M4 4h2M7 7h2M4 7h2M1 7h2"/></svg>
  </footer>
</body>
</html>
```
FILE: styles.css
```css
* {
  box-sizing: border-box;
}

body {
  margin: 0;
  height: 100vh;
  display: flex;
  flex-direction: column;
  overflow: hidden;
  background: #191b1d;
  color: #eceded;
  font-family: "Open Sans", "Noto Sans", sans-serif;
  font-size: 12px;
}

button {
  margin: 0;
  padding: 0;
  border: none;
  background: none;
  color: inherit;
  font: inherit;
  cursor: pointer;
}

svg {
  display: block;
  width: 18px;
  height: 18px;
  flex: none;
  fill: none;
  stroke: #dcdee0;
  stroke-width: 1.4;
}

.sprite {
  position: absolute;
  width: 0;
  height: 0;
}

/* icon colours */
.b { stroke: #4a90e8; }
.b2 { stroke: #3f8ae8; stroke-width: 1.5; }
.y { stroke: #f2b13a; }
.fb { fill: #3f8ae8; stroke: none; }
.fy { fill: #f5b83d; stroke: none; }
.fg { fill: #8b8f94; stroke: #b5b8bb; }

.ab {
  stroke: none;
}

.ab text {
  fill: #fff;
  font-size: 13px;
  font-weight: bold;
}

.grip {
  width: 2px;
  height: 17px;
  flex: none;
  background: repeating-linear-gradient(#d8dadb 0 2px, transparent 2px 4px);
}

.arrow {
  width: 6px;
  height: 4px;
}

/* title bar */
.titlebar {
  flex: none;
  display: flex;
  align-items: center;
  height: 23px;
  background: #fff;
  color: #000;
}

.app-icon {
  width: 12px;
  height: 12px;
  margin: 0 7px 0 4px;
}

.app-title {
  flex: 1;
  font-family: Roboto, sans-serif;
  font-size: 12px;
}

.win-btn {
  width: 45px;
  height: 20px;
  display: flex;
  align-items: center;
  justify-content: center;
}

.win-btn:last-child {
  margin-right: 3px;
}

.win-btn svg {
  width: 12px;
  height: 12px;
  stroke: #111;
  stroke-width: 1;
}

/* quick access bar */
.quick-bar {
  flex: none;
  display: flex;
  align-items: center;
  height: 29px;
  padding-left: 6px;
  background: #2e3235;
}

.quick-bar > .grip {
  margin-right: 9px;
}

.qt {
  width: 23px;
  height: 22px;
  display: flex;
  align-items: center;
  justify-content: center;
}

.qt.active {
  background: #1d3553;
  outline: 1px solid #2d6cb8;
  outline-offset: -1px;
}

.sep {
  width: 1px;
  height: 18px;
  margin: 0 3px 0 4px;
  background: #7a7d80;
}

.combo {
  display: flex;
  align-items: center;
  height: 22px;
  background: #45474c;
}

.combo > svg {
  margin-left: 1px;
}

.combo select {
  flex: 1;
  min-width: 0;
  height: 100%;
  padding: 0 4px;
  border: none;
  outline: none;
  appearance: none;
  background: transparent;
  color: #f0f0f0;
  font: inherit;
  font-size: 12px;
}

.quick-bar .combo-layer {
  width: 300px;
  margin: 0 4px;
}

.quick-bar .combo-style {
  width: 150px;
  margin: 0 7px 0 4px;
}

.quick-bar .combo-space {
  width: 125px;
  margin-right: 3px;
}

.swatch {
  width: 17px;
  height: 17px;
  margin-left: 2px;
  flex: none;
  background: #fff;
  border: 1px solid #000;
}

/* ribbon */
.ribbon-tabs {
  flex: none;
  display: flex;
  height: 28px;
  padding-left: 8px;
  background: #191b1d;
}

.app-btn svg {
  width: 28px;
  height: 28px;
}

.ribbon-tabs a {
  width: 80px;
  line-height: 29px;
  text-align: center;
  color: #f2f2f2;
  font-size: 13px;
  text-decoration: none;
}

.ribbon-tabs .current {
  width: 76px;
  margin-right: 2px;
  background: #2e3235;
}

.ribbon {
  flex: none;
  display: flex;
  height: 92px;
  background: #2e3235;
}

.panel {
  display: flex;
  flex-direction: column;
  padding: 4px 3px 0;
  border-right: 1px solid #4b4e52;
}

.panel:last-child {
  border-right: none;
}

.panel h2 {
  margin: 0;
  font-size: 11px;
  line-height: 20px;
  text-align: center;
  white-space: nowrap;
}

.panel-body {
  display: flex;
  height: 67px;
}

.panel-body > .grip {
  align-self: center;
  margin: 0 6px 0 1px;
}

.big {
  flex: 1;
  display: flex;
  flex-direction: column;
  align-items: center;
  padding-top: 1px;
  font-size: 11px;
  line-height: 15px;
  white-space: nowrap;
}

.big > svg {
  width: 34px;
  height: 34px;
  margin-bottom: 2px;
}

.big .arrow {
  width: 6px;
  height: 4px;
  margin-top: 5px;
}

.big span .arrow {
  display: inline-block;
  vertical-align: middle;
  margin: 0;
}

.rows {
  display: flex;
  flex-direction: column;
}

.row {
  display: flex;
  align-items: center;
  height: 22px;
}

.tool {
  width: 24px;
  height: 22px;
  display: flex;
  align-items: center;
  justify-content: center;
  flex: none;
}

.tool.drop {
  width: 34px;
  justify-content: flex-start;
  padding-left: 3px;
}

.tool .arrow {
  margin-left: 2px;
}

.tool.spaced {
  margin-right: 10px;
}

.tool.wide {
  width: auto;
  padding-left: 1px;
  gap: 1px;
  font-size: 11px;
}

.tag {
  width: 14px;
  background: #7d8084;
  color: #fff;
  font-size: 9px;
  font-weight: bold;
  line-height: 14px;
}

.tag.on {
  background: #3f8ff0;
}

.row .combo {
  flex: 1;
  height: 21px;
}

.row .combo-view > svg:first-child {
  margin: 0 5px 0 4px;
}

.row .combo-layer > svg:not(.chev) {
  width: 16px;
  height: 16px;
}

.row .combo-layer .swatch {
  width: 15px;
  height: 15px;
  margin-left: 5px;
}

.p-modeling { width: 130px; }
.p-direct { width: 99px; }
.p-solid { width: 113px; }
.p-draw { width: 123px; }
.p-modify { width: 199px; }
.p-sections { width: 86px; }
.p-coords { width: 75px; }
.p-views { width: 230px; }
.p-views .rows { flex: 1; }
.p-selection { width: 72px; }
.p-layers { width: 281px; padding-left: 0; }
.p-layers .rows { width: 227px; }
.p-groups { width: 117px; padding-left: 0; padding-right: 6px; }
.p-compare { width: 54px; }

/* document area */
.workspace {
  flex: 1;
  min-height: 0;
  display: flex;
}

.document {
  flex: 1;
  min-width: 0;
  display: flex;
  flex-direction: column;
}

.doc-tabs {
  flex: none;
  display: flex;
  height: 18px;
  padding-left: 2px;
  background: #2e3235;
  font-family: Roboto, sans-serif;
  font-size: 11px;
  line-height: 18px;
}

.doc-tab {
  display: flex;
  align-items: center;
  padding: 0 6px 0 10px;
  background: #191b1d;
}

.doc-tab button {
  margin-left: 16px;
}

.doc-tab svg {
  width: 10px;
  height: 10px;
  stroke: #c9cbcd;
  stroke-width: 2;
}

.doc-tab.current {
  padding: 0 8px 0 12px;
  background: #2e3235;
  color: #fff;
  font-size: 12px;
  font-weight: bold;
}

.add-tab {
  width: 25px;
  background: #191b1d;
  font-size: 16px;
}

.canvas {
  flex: 1;
  min-height: 0;
  border-top: 1px solid #66686a;
  border-right: 1px solid #66686a;
  overflow: hidden;
}

/* floor plan */
.plan {
  width: 100%;
  height: 100%;
  stroke-width: 1;
}

.plan .wall { fill: #adaeae; stroke: none; }
.plan .grey { stroke: #87898a; }
.plan .white { stroke: #fff; stroke-width: 1.2; }
.plan .door { stroke: #96551f; }
.plan .hatched { stroke: #fff; }
.plan pattern { stroke: #fff; }
.plan .glass { stroke: #6fb0ee; }
.plan .knob { fill: #7dbbff; stroke: none; }
.plan .cyan { stroke: #2ee0e0; }
.plan .thick { stroke: #17f2f5; stroke-width: 6; }
.plan .thin { stroke: #17e2e6; stroke-width: 2; }
.plan .nudge { fill: #124a92; stroke: none; }
.plan .nudge .lite { fill: #4a8bdc; }
.plan .nudge .tick { stroke: #d0d4d8; }
.plan .cross-y { stroke: #2fd79a; }
.plan .cross-x { stroke: #e08a8a; }
.plan .ucs text { stroke: none; font-family: "Open Sans", sans-serif; font-weight: 300; font-size: 18px; text-anchor: middle; }
.plan .axis { stroke: #fff; stroke-width: 1.5; }
.plan .uy { stroke: #1fb67c; }
.plan .ux { stroke: #e07a72; }
.plan .ty { fill: #1fb67c; }
.plan .tx { fill: #f08878; }
.plan .tw { fill: #fff; }
.plan .wheel circle { fill: #838587; stroke: #6c6e70; }
.plan .wheel path { fill: #55575a; stroke: none; }

/* layout tabs */
.layout-tabs {
  flex: none;
  display: flex;
  height: 20px;
  padding-bottom: 2px;
  background: #2e3235;
  border-bottom: 2px solid #191b1d;
  box-shadow: inset 0 -1px #66686a;
  font-family: Roboto, sans-serif;
  font-size: 11px;
}

.nav-btn {
  width: 15px;
  height: 15px;
  margin-right: 2px;
  display: flex;
  align-items: center;
  justify-content: center;
  background: #191b1d;
  border-top: 1px solid #8a8c8e;
  border-left: 1px solid #8a8c8e;
}

.nav-btn svg {
  width: 11px;
  height: 11px;
  fill: #fff;
  stroke: none;
}

.layout {
  padding: 0 4px;
  margin-right: 1px;
  background: #191b1d;
}

.layout.current {
  background: none;
  font-weight: bold;
}

.layout.add {
  font-size: 14px;
  line-height: 14px;
}

/* command line */
.command {
  flex: none;
  background: #2e3235;
  font-family: "DejaVu Sans Mono", monospace;
  font-size: 18px;
  color: #fff;
}

.history {
  display: flex;
  height: 69px;
}

.history-side {
  width: 8px;
  display: flex;
  flex-direction: column;
  align-items: center;
  gap: 24px;
  padding-top: 5px;
}

.history-side svg {
  width: 6px;
  height: 6px;
  stroke: #b8babc;
  stroke-width: 3;
}

.history-text {
  flex: 1;
  padding: 11px 5px 0;
  background: #838383;
}

.history-text p {
  margin: 0;
  line-height: 23px;
}

.scroll {
  width: 16px;
  display: flex;
  flex-direction: column;
  justify-content: space-between;
  align-items: center;
  padding: 6px 0 5px;
  background: #f0f0f0;
}

.scroll svg {
  width: 10px;
  height: 7px;
  stroke: #444;
  stroke-width: 1.6;
}

.thumb {
  width: 14px;
  height: 17px;
  margin-top: 18px;
  background: #cdcdcd;
}

.prompt {
  display: flex;
  align-items: center;
  height: 28px;
  padding: 0 0 2px 9px;
}

.prompt label {
  white-space: pre;
}

.prompt button {
  background: #76808b;
  line-height: 22px;
}

.prompt b {
  color: #f5b02e;
  font-weight: normal;
}

.prompt input {
  flex: 1;
  border: none;
  outline: none;
  background: transparent;
  color: #fff;
  font: inherit;
}

/* right side panel */
.side {
  flex: none;
  width: 46px;
  display: flex;
  flex-direction: column;
}

.side-grip {
  height: 9px;
  display: flex;
  justify-content: center;
  padding-top: 4px;
  background: #2e3235;
}

.side-grip .grip {
  width: 17px;
  height: 2px;
  background: repeating-linear-gradient(90deg, #d8dadb 0 2px, transparent 2px 4px);
}

.side-icons button {
  display: flex;
  align-items: center;
  justify-content: center;
  width: 100%;
  height: 50px;
}

.side-icons svg {
  width: 25px;
  height: 25px;
  stroke: #e6e7e8;
}

.side-icons .fx {
  font-family: "Liberation Serif", serif;
  font-size: 18px;
  font-weight: bold;
}

/* status bar */
.status {
  flex: none;
  display: flex;
  height: 19px;
  padding: 2px 5px 2px 2px;
  background: #191b1d;
  font-family: Roboto, sans-serif;
  font-size: 11px;
  line-height: 15px;
}

.ready {
  flex: 1;
}

.coords {
  padding-right: 5px;
}

.status button {
  padding: 0 3px 0 2px;
  border-left: 1px solid #d0d2d4;
}

.status button span {
  display: block;
  padding: 0 1px;
}

.status .on span {
  background: #45484e;
}

.status .off {
  color: #6b6e72;
}

.status .more {
  width: 48px;
  padding: 3px 0 0 5px;
}

.resize {
  width: 9px;
  height: 9px;
  margin-top: 6px;
  stroke: #b8babc;
  stroke-width: 2;
}
```
